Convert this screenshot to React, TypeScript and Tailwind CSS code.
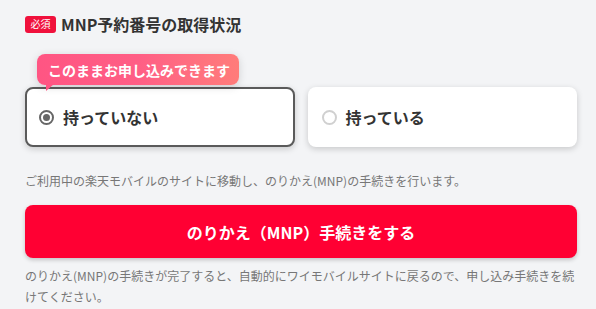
import React from "react";

export default function App() {
  const font = { fontFamily: '"Noto Sans CJK JP", "Noto Sans", sans-serif' };
  return (
    <div className="w-[596px] h-[309px] bg-[#f3f4f6] overflow-hidden" style={font}>
      <div className="w-[552px] ml-[25px] pt-[15px]">
        <div className="flex items-center gap-[5px] h-[18px]">
          <span className="inline-flex items-center justify-center w-[31px] h-[17px] rounded-[3px] bg-[#f0113c] text-white text-[10px] leading-none">
            必須
          </span>
          <span className="text-[16px] font-bold text-[#333] leading-none">MNP予約番号の取得状況</span>
        </div>

        <div className="grid grid-cols-2 gap-[13px] mt-[54px]">
          <div className="relative h-[60px] rounded-[8px] border-2 border-[#5a5a5a] bg-white shadow-[0_2px_6px_rgba(0,0,0,0.18)] flex items-center pl-[12px] gap-[9px]">
            <div className="absolute left-[10px] top-[-35px] z-10">
              <div className="h-[31px] w-[202px] rounded-[8px] bg-gradient-to-r from-[#ff5583] via-[#ff5e85] to-[#ff7c7a] shadow-[0_2px_8px_rgba(0,0,0,0.15)] flex items-center pl-[11px]">
                <span className="text-white text-[14px] font-bold leading-none">このままお申し込みできます</span>
              </div>
              <svg className="absolute left-[9px] top-[30px]" width="8" height="7" viewBox="0 0 8 7">
                <polygon points="0,0 8,0 0,7" fill="#ff5583" />
              </svg>
            </div>
            <span className="w-[15px] h-[15px] rounded-full border-2 border-[#666] flex items-center justify-center">
              <span className="w-[7px] h-[7px] rounded-full bg-[#666]" />
            </span>
            <span className="text-[16px] font-bold text-[#333] leading-none">持っていない</span>
          </div>
          <div className="h-[60px] rounded-[8px] border-2 border-transparent bg-white shadow-[0_2px_6px_rgba(0,0,0,0.18)] flex items-center pl-[12px] gap-[9px]">
            <span className="w-[15px] h-[15px] rounded-full border-2 border-[#d0d0d0]" />
            <span className="text-[16px] font-bold text-[#333] leading-none">持っている</span>
          </div>
        </div>

        <p className="mt-[26px] text-[12px] text-[#777] leading-[16px]">
          ご利用中の楽天モバイルのサイトに移動し、のりかえ(MNP)の手続きを行います。
        </p>

        <button className="mt-[16px] w-full h-[53px] rounded-[8px] bg-[#ff0033] shadow-[0_2px_4px_rgba(0,0,0,0.2)] text-white text-[16px] font-bold flex items-center justify-center">
          のりかえ（MNP）手続きをする
        </button>

        <p className="mt-[7px] text-[12px] text-[#777] leading-[21px]">
          のりかえ(MNP)の手続きが完了すると、自動的にワイモバイルサイトに戻るので、申し込み手続きを続けてください。
        </p>
      </div>
    </div>
  );
}
